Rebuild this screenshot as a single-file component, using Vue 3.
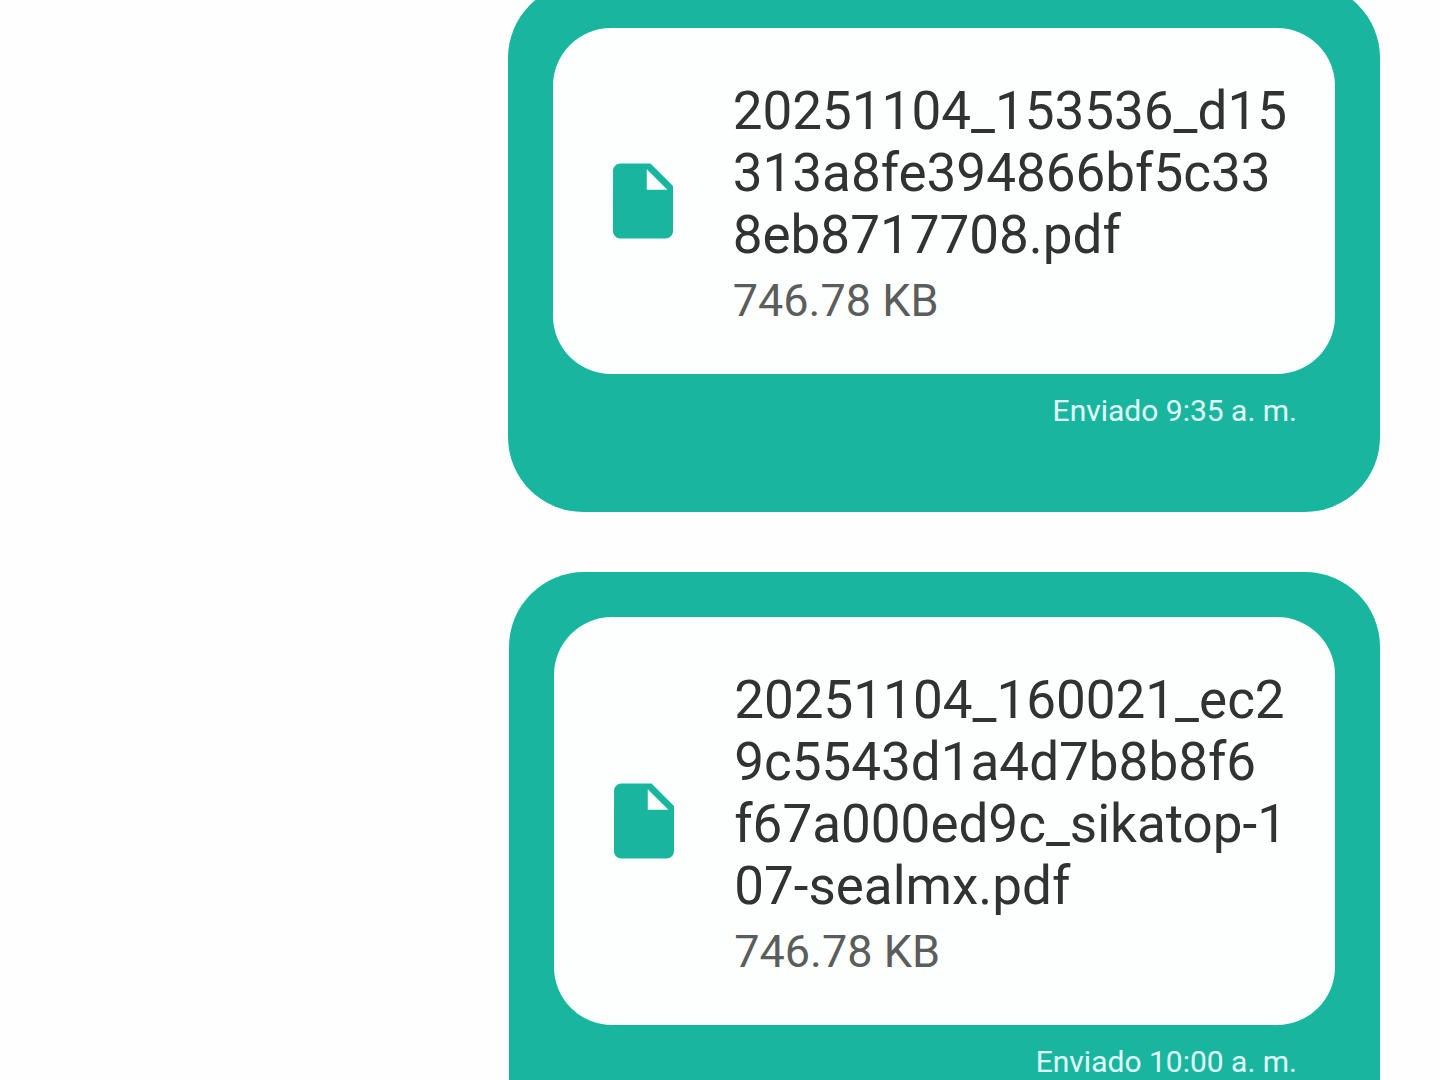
<template>
    <main class="chat">
        <article v-for="message in messages" :key="message.id" class="bubble">
            <a class="file" href="#">
                <svg class="file-icon" viewBox="0 0 24 24" aria-hidden="true">
                    <path d="M6 2c-1.1 0-1.99.9-1.99 2L4 20c0 1.1.89 2 1.99 2H18c1.1 0 2-.9 2-2V8l-6-6H6zm7 7V3.5L18.5 9H13z" />
                </svg>
                <div class="details">
                    <div class="name">
                        <span v-for="line in message.name" :key="line">{{ line }}</span>
                    </div>
                    <div class="size">{{ message.size }}</div>
                </div>
            </a>
            <p class="status">Enviado {{ message.time }}</p>
        </article>
    </main>
</template>


<script setup>
const messages = [
    {
        id: 1,
        name: ['20251104_153536_d15', '313a8fe394866bf5c33', '8eb8717708.pdf'],
        size: '746.78 KB',
        time: '9:35 a. m.'
    },
    {
        id: 2,
        name: ['20251104_160021_ec2', '9c5543d1a4d7b8b8f6', 'f67a000ed9c_sikatop-1', '07-sealmx.pdf'],
        size: '746.78 KB',
        time: '10:00 a. m.'
    }
];
</script>

<style>
body{
    background-color: #fefefe;
}
</style>

<style scoped>

.chat{
    display: flex;
    flex-direction: column;
    align-items: flex-end;
    gap: 60px;
    box-sizing: border-box;
    height: 100vh;
    padding: 0 60px;
    overflow: hidden;
    font-family: Roboto, sans-serif;
}

.bubble{
    flex: none;
    padding: 45px 45px 83px;
    border-radius: 75px;
    background-color: #19b69f;
}

/* the list is scrolled a little past the top of the first bubble */
.bubble:first-child{
    margin-top: -17px;
}

.file{
    display: flex;
    align-items: center;
    gap: 45px;
    padding: 46px 48px 46px 45px;
    border-radius: 58px;
    background-color: #fdfffe;
    text-decoration: none;
}

.file-icon{
    flex: none;
    width: 90px;
    height: 90px;
    fill: #19b69f;
}

.details{
    padding-top: 6px;
}

.name{
    font-size: 53px;
    line-height: 62px;
    color: #303332;
}

.name span{
    display: block;
    white-space: nowrap;
}

.size{
    margin-top: 8px;
    font-size: 45px;
    line-height: 54px;
    color: #5b5d5c;
}

.status{
    margin: 19px 38px 0 0;
    font-size: 30px;
    line-height: 36px;
    text-align: right;
    color: #e3fffa;
}

</style>
